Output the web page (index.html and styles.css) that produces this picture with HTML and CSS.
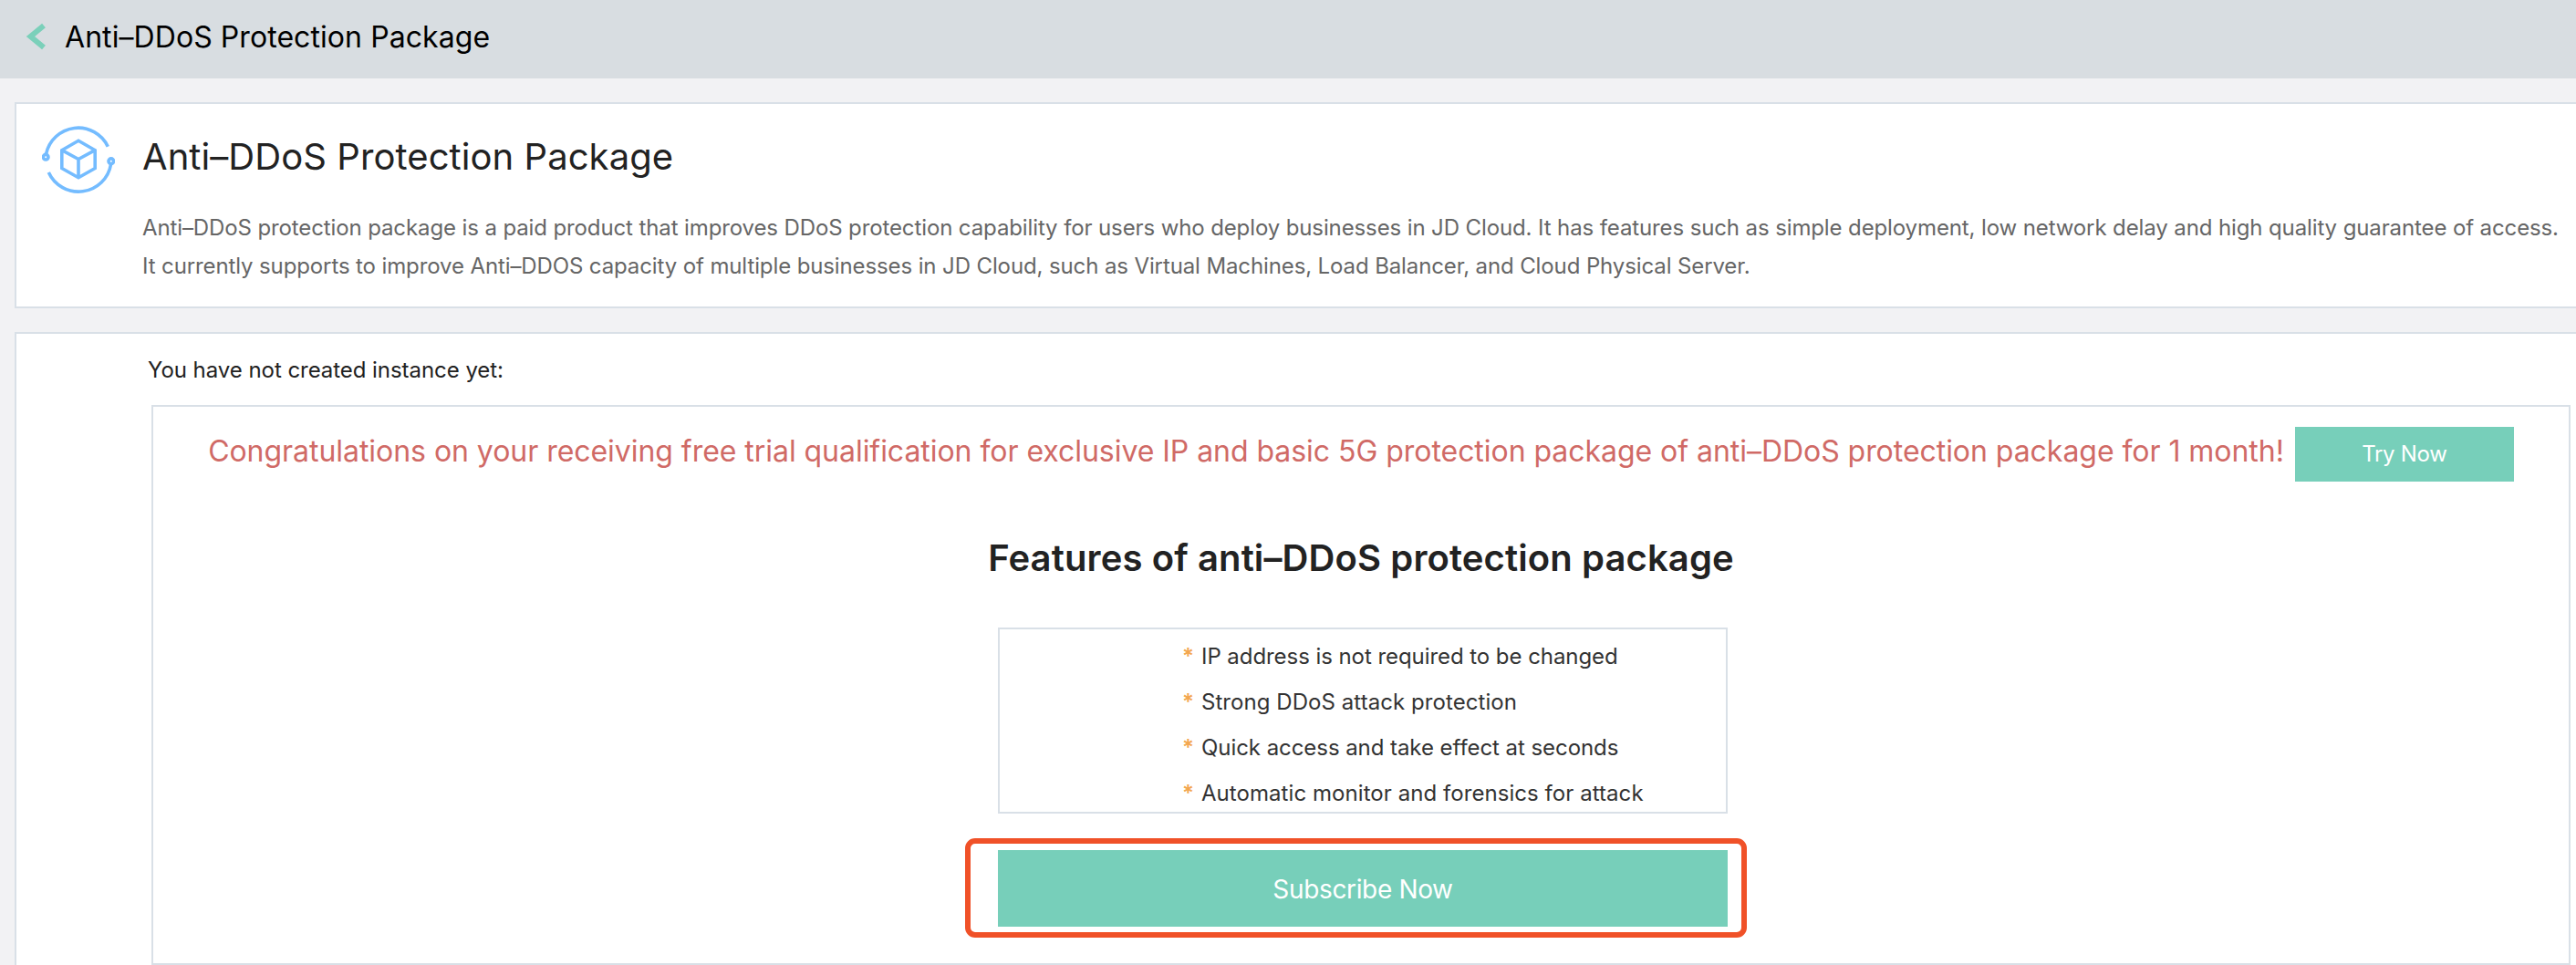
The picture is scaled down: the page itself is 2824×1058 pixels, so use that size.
FILE: index.html
```html
<!DOCTYPE html>
<html lang="en">
<head>
<meta charset="utf-8">
<title>Anti–DDoS Protection Package</title>
<link rel="stylesheet" href="styles.css">
</head>
<body>
<header class="topbar">
  <svg class="back" viewBox="0 0 24 32" aria-hidden="true"><path d="M22 4 7.500 16 22 28"/></svg>
  <span class="topbar-title">Anti–DDoS Protection Package</span>
</header>
<main class="content">
  <section class="panel intro">
    <svg class="product-icon" viewBox="0 0 80 80" aria-hidden="true">
      <path d="M4.500 34A36 36 0 0 1 72.300 25.700"/>
      <path d="M7.300 54A36 36 0 0 0 75.600 45"/>
      <circle cx="4.200" cy="37.200" r="2.800"/>
      <circle cx="75.800" cy="41.700" r="2.800"/>
      <path d="M40 19.300 58.200 29.700V49.500L40 59.800 21.800 49.500V29.700ZM21.800 29.700 40 39.500 58.200 29.700M40 39.500V59.800"/>
    </svg>
    <div class="intro-text">
      <h1 class="intro-title">Anti–DDoS Protection Package</h1>
      <p class="intro-desc">Anti–DDoS protection package is a paid product that improves DDoS protection capability for users who deploy businesses in JD Cloud. It has features such as simple deployment, low network delay and high quality guarantee of access.<br>It currently supports to improve Anti–DDOS capacity of multiple businesses in JD Cloud, such as Virtual Machines, Load Balancer, and Cloud Physical Server.</p>
    </div>
  </section>
  <section class="panel instances">
    <p class="empty-note">You have not created instance yet:</p>
    <div class="offer">
      <div class="trial">
        <p class="trial-text">Congratulations on your receiving free trial qualification for exclusive IP and basic 5G protection package of anti–DDoS protection package for 1 month!</p>
        <button class="btn btn-try">Try Now</button>
      </div>
      <h2 class="features-title">Features of anti–DDoS protection package</h2>
      <ul class="features">
        <li><span class="star">*</span>IP address is not required to be changed</li>
        <li class="wide"><span class="star">*</span>Strong DDoS attack protection</li>
        <li><span class="star">*</span>Quick access and take effect at seconds</li>
        <li class="wide"><span class="star">*</span>Automatic monitor and forensics for attack</li>
      </ul>
      <div class="subscribe">
        <button class="btn btn-subscribe">Subscribe Now</button>
        <span class="highlight"></span>
      </div>
    </div>
  </section>
</main>
</body>
</html>
```
FILE: styles.css
```css
* { box-sizing: border-box; margin: 0; padding: 0; }
body {
  height: 1058px;
  overflow: hidden;
  background: #f2f2f4;
  color: #222;
  font: 400 24px/30px Inter, "Liberation Sans", sans-serif;
}
.topbar {
  display: flex;
  height: 86px;
  padding-left: 26px;
  background: #d8dde1;
  color: #000;
}
.back {
  width: 24px;
  height: 32px;
  margin: 24px 21px 0 0;
  fill: none;
  stroke: #7bd0ba;
  stroke-width: 6;
}
.topbar-title { font-size: 32px; line-height: 82px; letter-spacing: 0.07px; }
.content {
  display: flex;
  flex-direction: column;
  gap: 26px;
  padding: 26px 0 0 16px;
}
.panel {
  background: #fff;
  border: 2px solid #d9e0e7;
  border-right: 0;
}
.intro {
  display: flex;
  height: 226px;
  padding-left: 28px;
}
.product-icon {
  flex: none;
  width: 80px;
  height: 80px;
  margin-top: 21px;
  fill: none;
  stroke: #74bcff;
  stroke-width: 3.6;
}
.intro-text { padding: 34px 0 0 30px; }
.intro-title {
  margin-bottom: 33px;
  font-size: 40px;
  font-weight: 400;
  line-height: 48px;
  letter-spacing: 0.07px;
}
.intro-desc {
  color: #666;
  line-height: 42px;
  letter-spacing: -0.115px;
  white-space: nowrap;
}
.instances {
  height: 720px;
  padding: 25px 6px 0 148px;
}
.empty-note { margin: 0 0 23px -4px; letter-spacing: -0.05px; }
.offer {
  display: flex;
  flex-direction: column;
  align-items: center;
  height: 614px;
  padding-top: 22px;
  border: 2px solid #d9e0e7;
}
.trial {
  display: flex;
  align-items: flex-start;
  gap: 12px;
}
.trial-text {
  color: #d06a66;
  font-size: 32px;
  line-height: 54px;
  letter-spacing: -0.042px;
  white-space: nowrap;
}
.btn {
  display: block;
  border: 0;
  background: #77cfba;
  color: #fff;
  font-family: inherit;
}
.btn-try {
  width: 240px;
  height: 60px;
  padding-bottom: 1px;
  font-size: 24px;
  letter-spacing: -0.3px;
}
.features-title {
  margin: 54px 0 46px;
  font-size: 40px;
  font-weight: 600;
  line-height: 60px;
  letter-spacing: 0.11px;
}
.features {
  display: flex;
  flex-direction: column;
  gap: 10px;
  width: 800px;
  height: 204px;
  margin-left: 4px;
  padding: 10px 0 0 200px;
  border: 2px solid #d9e0e7;
  color: #333;
  line-height: 40px;
  list-style: none;
}
.features li { display: flex; letter-spacing: -0.06px; }
.features .wide { letter-spacing: 0.06px; }
.star { width: 21px; color: #f3a650; font-weight: 600; }
.subscribe { position: relative; margin: 40px 0 0 4px; }
.btn-subscribe {
  width: 800px;
  height: 84px;
  padding-top: 1px;
  font-size: 28px;
  letter-spacing: -0.35px;
}
.highlight {
  position: absolute;
  inset: -13px -21px -12px -36px;
  border: 6px solid #f05128;
  border-radius: 11px;
  pointer-events: none;
}
```
